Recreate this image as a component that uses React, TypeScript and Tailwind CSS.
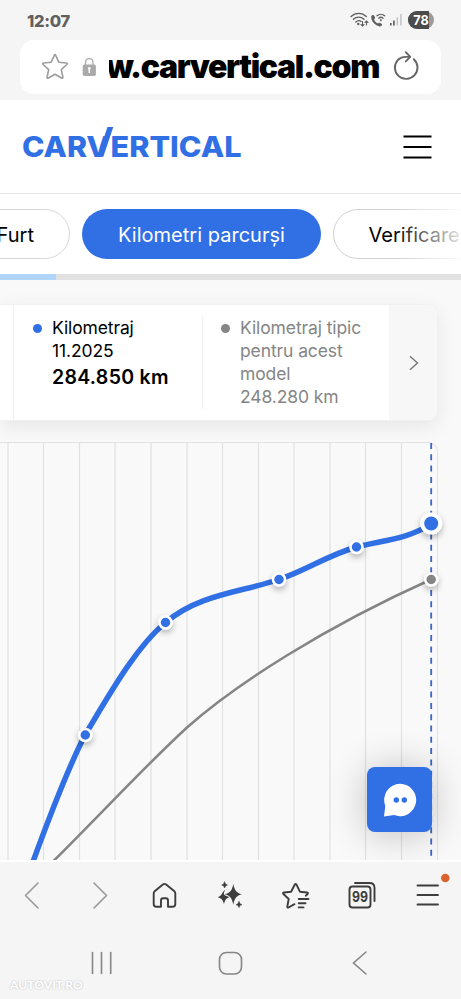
import React from "react";

const GRID_LINES = [8, 43.5, 79.5, 115, 151, 187, 222.5, 258.5, 294, 330, 365.5, 401.5];

const POINTS = [
  { x: 85.3, y: 292 },
  { x: 165.5, y: 179.5 },
  { x: 279, y: 136.5 },
  { x: 356.5, y: 104 },
];

function StatusBar() {
  return (
    <div className="flex h-10 shrink-0 items-center justify-between pl-[27px] pr-[27px]">
      <span className="pt-px text-[16.5px] leading-5 font-extrabold tracking-[-0.3px] text-[#606060]">12:07</span>
      <div className="flex items-center">
        <svg width="84" height="22" viewBox="0 0 84 22" fill="none">
          <g stroke="#606060" strokeWidth="1.4" strokeLinecap="round">
            <path d="M1 7.5C5.5 3.3 12 3.3 16.300 7.5" />
            <path d="M3.400 10.300C6.500 7.400 11 7.400 14 10.300" />
            <path d="M5.800 13C7.500 11.500 9.700 11.500 11 12.400" />
            <path d="M12.500 12.500v4.500m-1.500-1.500L12.500 17l1.500-1.500M16.500 16v-4m-1.500 1.500 1.500-1.500 1.500 1.500" strokeWidth="1.100" />
            <path d="M27 6.800c2.200-2 5.500-2 7.700 0M28.800 9.200c1.300-1.200 2.900-1.200 4.200 0" strokeWidth="1.300" />
          </g>
          <circle cx="8.300" cy="15" r="1.200" fill="#606060" />
          <circle cx="30.900" cy="11.200" r="1" fill="#606060" />
          <path d="M22.100 6.300c.8-.7 1.700-.5 2.100.4l.8 1.600c.3.800-.1 1.400-.9 1.900.7 2.200 2 3.500 3.900 4.300.7-.8 1.400-1 2.100-.6l1.400.9c.8.600.8 1.400 0 2-1.300 1-3 .8-5-.5-3-1.900-4.900-4.500-5.300-7.500-.1-1.100.3-1.900.9-2.500Z" fill="#606060" />
          <path d="M40.800 14v2.500" stroke="#606060" strokeWidth="1.700" />
          <path d="M43.900 11.500v5" stroke="#606060" strokeWidth="1.700" />
          <path d="M47.300 8.300v8.200M50.900 5v11.500" stroke="#c4c4c4" strokeWidth="1.500" />
          <rect x="58" y="2" width="26" height="18" rx="9" fill="#9b9b9b" />
          <path d="M67 2h12v18H67a9 9 0 0 1 0-18Z" fill="#4b4b4b" />
          <text x="71" y="15.700" textAnchor="middle" textLength="15.500" lengthAdjust="spacingAndGlyphs" fill="#fff" className="font-['Inter',sans-serif] text-[13.5px] font-bold">78</text>
        </svg>
      </div>
    </div>
  );
}

function AddressBar() {
  return (
    <div className="mx-5 mb-[6px] flex h-[54px] shrink-0 items-center rounded-[14px] bg-white pl-5">
      <svg width="30" height="30" viewBox="0 0 30 30" fill="none" stroke="#9d9d9d" strokeWidth="1.600" strokeLinejoin="round">
        <path d="M14.300 3.300q.7-1.300 1.400 0l3.100 6.900 7.600.8q1.700.3.500 1.500l-5.600 5.100 1.600 7.500q.2 1.700-1.300.9L15 22.200 8.400 26q-1.500.8-1.300-.9l1.600-7.500-5.600-5.100q-1.200-1.200.5-1.500l7.600-.8Z" />
      </svg>
      <svg className="ml-3" width="15" height="20" viewBox="0 0 15 20" fill="none">
        <path d="M3.500 8V5.500C3.500 3 5 1.600 7.200 1.600S11 3 11 5.500V8" stroke="#aaa" strokeWidth="1.300" />
        <rect x=".7" y="7.500" width="13.200" height="11.500" rx="1.800" fill="#aaa" />
        <path d="M7.300 11v5" stroke="#fff" strokeWidth="1.500" />
        <circle cx="7.300" cy="11.300" r="1.300" fill="#fff" />
      </svg>
      <div className="ml-[12px] flex w-[272px] justify-end overflow-hidden">
        <span className="pr-[2px] text-[32px] leading-[40px] font-black tracking-[-1.35px] whitespace-nowrap text-black">w.carvertical.com</span>
      </div>
      <svg className="ml-[10px]" width="30" height="32" viewBox="0 0 30 32" fill="none" stroke="#666" strokeWidth="1.900" strokeLinecap="round" strokeLinejoin="round">
        <path d="M22.800 8.200A11.300 11.300 0 1 1 7 8.800Q10 5.900 14.500 5.900H18.500" />
        <path d="m14.800 1.200 4.400 4.700-4.400 4.500" />
      </svg>
    </div>
  );
}

function SiteHeader() {
  return (
    <header className="flex h-[94px] shrink-0 items-center justify-between border-b border-[#e8e8e8] bg-white pr-[29px] pl-[22px]">
      <svg width="222" height="44" viewBox="0 0 222 44" fill="#3070e4">
        <g className="font-['Inter',sans-serif] text-[28.5px] font-extrabold">
          <text x="0" y="31.700" textLength="65" lengthAdjust="spacingAndGlyphs">CAR</text>
          <text x="64.200" y="31.700" textLength="23.500" lengthAdjust="spacingAndGlyphs">V</text>
          <text x="88.500" y="31.700" textLength="131" lengthAdjust="spacingAndGlyphs">ERTICAL</text>
        </g>
        <path d="M75.500 31.700 85.500 2h5.800L81.300 31.700Z" />
      </svg>
      <svg width="29" height="24" viewBox="0 0 29 24" stroke="#000" strokeWidth="2">
        <path d="M.5 1.500h28M.5 12h28M.5 22.500h28" />
      </svg>
    </header>
  );
}

function Tabs() {
  const base = "flex h-[50px] shrink-0 items-center justify-center rounded-full pt-px text-[20px] tracking-[0.02px] whitespace-nowrap";
  return (
    <nav className="relative flex h-[80px] shrink-0 justify-start gap-3 overflow-hidden bg-white pt-[15px]">
      <div className={`${base} -ml-10 w-[110px] border border-[#d7d7d7] pr-[35px] text-black`}>
        <span className="ml-auto">Furt</span>
      </div>
      <div className={`${base} w-[239px] bg-[#3070e4] text-white`}>Kilometri parcurși</div>
      <div className={`${base} w-[240px] border border-[#d0d0d0] text-black`}>
        <span className="mr-auto ml-[34.5px]">Verificare daune</span>
      </div>
      <div className="absolute inset-y-0 right-0 w-[68px] bg-linear-to-r from-white/0 to-white/90" />
    </nav>
  );
}

function Dot({ className }: { className: string }) {
  return <span className={`mt-[7.5px] size-[9px] shrink-0 rounded-full ${className}`} />;
}

function MileageCard() {
  return (
    <section className="mt-[24px] mr-[23px] flex h-[117px] shrink-0 overflow-hidden rounded-r-[10px] border-y border-r border-[#f1f1f1] bg-white shadow-[0_6px_20px_rgba(0,0,0,0.08)]">
      <div className="w-[14px] border-r border-[#f0f0f0]" />
      <div className="my-[11px] flex w-[189px] border-r border-[#f0f0f0] pl-[19px]">
        <Dot className="bg-[#3070e4]" />
        <div className="ml-[10px] text-[17.5px] leading-[23px] tracking-[-0.12px] text-black">
          <p>Kilometraj</p>
          <p>11.2025</p>
          <p className="mt-px text-[19.5px] leading-7 font-semibold tracking-[0.3px]">284.850 km</p>
        </div>
      </div>
      <div className="my-[11px] flex w-[186px] pl-[18px] text-[#858585]">
        <Dot className="bg-[#858585]" />
        <div className="ml-[10px] text-[17.5px] leading-[23.1px] tracking-[-0.1px] whitespace-nowrap">
          <p>Kilometraj tipic</p>
          <p>pentru acest</p>
          <p>model</p>
          <p>248.280 km</p>
        </div>
      </div>
      <div className="flex flex-1 items-center justify-center bg-[#f7f7f7] pl-px">
        <svg width="10" height="16" viewBox="0 0 10 16" fill="none" stroke="#777" strokeWidth="1.400">
          <path d="m1 1.300 7.500 6.700L1 14.700" />
        </svg>
      </div>
    </section>
  );
}

function MileageChart() {
  return (
    <section className="relative mt-[21px] h-[420px] shrink-0">
      <svg width="461" height="420" viewBox="0 -1 461 420" fill="none">
        <defs>
          <filter id="shade" x="-100%" y="-100%" width="300%" height="300%">
            <feDropShadow dx="0" dy="3" stdDeviation="3" floodOpacity="0.300" />
          </filter>
        </defs>
        <path d="M0-.5h428.500a9 9 0 0 1 9 9V417" stroke="#e2e2e2" />
        {GRID_LINES.map((x) => (
          <path key={x} d={`M${x} -.5V417`} stroke="#e2e2e2" strokeWidth="1.300" />
        ))}
        <path d="M431.200 0V417" stroke="#3667c8" strokeWidth="1.800" strokeDasharray="6 5.300" />
        <path d="M53 418.500 C100 372 145 323 187 284.500 C236 241 325 184 431 136.500" stroke="#858585" strokeWidth="2.500" />
        <path d="M32.500 420 C46 383 66 329 85 292 C108 254 135 205 165.500 179.500 C199 151 242 149 279 136.500 C307 127 328 112 356.500 104 C384 97 408 96 431 81" stroke="#3070e4" strokeWidth="5.500" />
        <g stroke="#fff" filter="url(#shade)">
          {POINTS.map((p) => (
            <circle key={p.x} cx={p.x} cy={p.y} r="6" fill="#3070e4" strokeWidth="2.500" />
          ))}
          <circle cx="431.200" cy="136.500" r="6" fill="#858585" strokeWidth="2.500" />
          <circle cx="431.200" cy="80.500" r="9" fill="#3070e4" strokeWidth="4" />
        </g>
        <path d="M0 418h461" stroke="#fff" strokeWidth="2" />
      </svg>
      <div className="absolute top-0 right-0 bottom-0 w-[200px] overflow-hidden">
        <button className="absolute right-[29px] bottom-[30px] flex size-[65px] items-center justify-center rounded-[8px] bg-[#3070e4] shadow-[0_2px_38px_rgba(0,0,0,0.23)]">
          <svg width="34" height="34" viewBox="0 0 34 34">
            <path d="M17 .8a16.200 16.200 0 1 1-5.900 31.300L1 33.500 2.300 23A16.200 16.200 0 0 1 17 .8Z" fill="#fff" />
            <circle cx="13.300" cy="17" r="2.700" fill="#3070e4" />
            <circle cx="21.300" cy="17" r="2.700" fill="#3070e4" />
          </svg>
        </button>
      </div>
    </section>
  );
}

function BrowserToolbar() {
  return (
    <div className="flex h-[68px] shrink-0 items-center bg-[#f5f5f5]">
      <svg width="461" height="68" viewBox="0 862 461 68" fill="none" stroke="#3d3d3d" strokeWidth="1.900" strokeLinecap="round" strokeLinejoin="round">
        <g stroke="#9a9a9a" strokeWidth="1.600">
          <path d="m38 883-12.500 12.500L38 908M94 883l12.500 12.500L94 908" />
        </g>
        <path d="M153.700 893.500q0-1.600 1.200-2.600l8-6.400q1.600-1.200 3.200 0l8 6.400q1.200 1 1.200 2.600v10.500q0 2.800-2.800 2.800h-4.500v-6.300q0-2.200-2.200-2.200h-2.600q-2.200 0-2.200 2.200v6.300h-4.500q-2.800 0-2.800-2.800Z" />
        <g fill="#3d3d3d" stroke="none">
          <path d="M233.300 884c1.300 6.300 3 8.800 8.700 10.300-5.700 1.500-7.400 4-8.700 10.400-1.300-6.400-3-8.900-8.700-10.400 5.700-1.500 7.400-4 8.700-10.300Z" />
          <path d="M225.200 889.800c-1 1.800-2 4-.8 5.200 1 1 3.200 1 4.800 2.200-3 1-4.300 2.800-5.200 7-1-4.200-2.400-6-6.200-7 4.400-1.200 4.500-5.800 7.400-7.400Z" />
          <path d="M224.600 882q.5 2.500 2.900 3-2.400.5-2.900 3-.5-2.500-2.900-3 2.400-.5 2.900-3ZM239 901.600q.5 2.500 3 3-2.500.5-3 3-.5-2.500-3-3 2.500-.5 3-3Z" stroke="#3d3d3d" strokeWidth=".5" />
        </g>
        <path d="m294.500 904.200-6 3.300q-1.300.6-1.200-.9l1.400-7.600-5.300-5q-1-1.200.5-1.500l7.200-.8 3.600-7q.9-1.500 1.800 0l3.400 7 7.200.8q1.500.3.500 1.500l-1.800 1.700M298.700 899h9.800M298.700 903.200h6.800M298.700 907.400h4.800" />
        <rect x="349.500" y="886.500" width="21" height="21" rx="3" />
        <path d="M355 883h14.500q5 0 5 5v13" />
        <text x="360" y="902" textAnchor="middle" textLength="16" lengthAdjust="spacingAndGlyphs" fill="#3d3d3d" stroke="none" className="font-['Inter',sans-serif] text-[14px] font-bold">99</text>
        <path d="M417.500 885.500H438M417.500 895H438M417.500 904.500H438" />
        <circle cx="445.300" cy="878" r="4.300" fill="#d9622f" stroke="none" />
      </svg>
    </div>
  );
}

function SystemNavigation() {
  return (
    <div className="relative flex h-[69px] shrink-0 items-start bg-[#f5f5f5]">
      <svg width="461" height="69" viewBox="0 930 461 69" fill="none" stroke="#858585" strokeWidth="1.600" strokeLinecap="round">
        <path d="M92.500 952.500v21M101.500 952.500v21M110.700 952.500v21" />
        <rect x="219.500" y="952.500" width="22" height="21.500" rx="7" />
        <path d="m366 952-12.500 11 12.500 11" />
      </svg>
      <span className="absolute bottom-[5px] left-[10px] font-['Lato',sans-serif] text-[12px] leading-[18px] font-bold tracking-[0.1px] text-white [text-shadow:0_0_2px_#b5b5b5]">AUTOVIT.RO</span>
    </div>
  );
}

export default function App() {
  return (
    <main className="flex h-[999px] w-[461px] flex-col overflow-hidden bg-[#f5f5f5] font-['Inter','Liberation_Sans',sans-serif]">
      <StatusBar />
      <AddressBar />
      <SiteHeader />
      <Tabs />
      <div className="h-[6px] shrink-0 bg-[#e1e1e1]">
        <div className="h-full w-14 bg-[#afd6f8]" />
      </div>
      <div className="flex h-[582px] shrink-0 flex-col bg-[#f9f9f9]">
        <MileageCard />
        <MileageChart />
      </div>
      <BrowserToolbar />
      <SystemNavigation />
    </main>
  );
}
